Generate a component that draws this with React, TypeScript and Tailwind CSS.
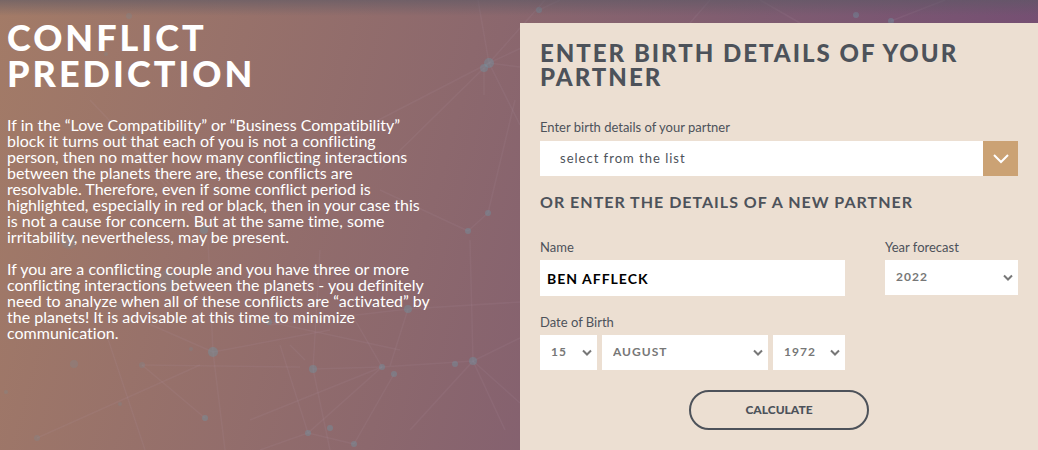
import { useId, useState } from 'react'
import clsx from 'clsx'

const MONTHS = ['January', 'February', 'March', 'April', 'May', 'June', 'July', 'August', 'September', 'October', 'November', 'December']
const DAYS = Array.from({ length: 31 }, (_, i) => String(i + 1))
const YEARS = Array.from({ length: 100 }, (_, i) => String(1925 + i))
const FORECAST_YEARS = ['2021', '2022', '2023', '2024', '2025']

// x, y, radius
const STARS = [
  [129, 16, 3], [106, 54, 2], [489, 63, 5], [484, 68, 4], [539, 10, 3], [856, 15, 3], [891, 21, 3],
  [488, 213, 3], [468, 231, 3], [124, 137, 3], [204, 230, 4], [69, 241, 8], [310, 162, 3],
  [168, 281, 11], [118, 306, 4], [408, 309, 4], [269, 322, 3], [213, 352, 5], [191, 349, 2],
  [142, 365, 3], [74, 364, 4], [313, 369, 4], [382, 367, 3], [394, 374, 3], [455, 364, 3],
  [473, 361, 4], [120, 404, 2], [205, 418, 3], [6, 392, 2], [37, 438, 3], [308, 433, 3],
  [330, 428, 3], [354, 444, 3],
]

// x1, y1, x2, y2
const LINES = [
  [489, 63, 478, 0], [489, 63, 545, 0], [489, 63, 330, 145], [489, 63, 380, 170], [489, 63, 520, 125],
  [489, 63, 560, 30], [489, 63, 560, 72], [484, 68, 484, 95], [124, 137, 204, 230], [90, 100, 175, 190],
  [213, 352, 140, 320], [213, 352, 208, 240], [213, 352, 330, 330], [213, 352, 225, 450],
  [142, 365, 205, 418], [142, 365, 300, 367], [105, 330, 145, 450], [37, 438, 200, 365],
  [313, 369, 382, 367], [382, 367, 473, 361], [313, 369, 330, 450], [313, 369, 320, 250], [382, 367, 355, 320],
  [382, 367, 308, 433], [382, 367, 250, 420], [394, 374, 354, 444], [408, 309, 390, 366],
  [408, 309, 270, 325], [408, 309, 520, 302], [473, 361, 520, 338], [473, 361, 520, 403],
  [473, 361, 505, 430], [473, 361, 410, 430], [473, 361, 470, 240], [488, 213, 468, 231],
  [488, 213, 515, 100], [468, 231, 380, 190], [270, 322, 400, 350], [280, 345, 308, 433],
  [308, 433, 354, 444], [308, 433, 260, 450], [290, 345, 305, 360],
  [539, 10, 560, 0], [760, 0, 800, 23], [891, 21, 945, 0], [690, 23, 710, 0],
]

function Constellation() {
  return (
    <svg className="pointer-events-none absolute top-0 left-0 h-[450px] w-[1038px]" viewBox="0 0 1038 450" aria-hidden="true">
      <g stroke="#b9a0b4" strokeOpacity="0.1" strokeWidth="1.5">
        {LINES.map(([x1, y1, x2, y2], i) => <line key={i} x1={x1} y1={y1} x2={x2} y2={y2} />)}
      </g>
      <g fill="#6f96a5" fillOpacity="0.4">
        {STARS.map(([cx, cy, r], i) => (
          <circle key={i} cx={cx} cy={cy} r={r} fillOpacity={cx < 200 ? 0.2 : undefined} />
        ))}
      </g>
    </svg>
  )
}

type SelectProps = {
  label: string
  id?: string
  options: string[]
  value: string
  onChange: (value: string) => void
  className?: string
}

function SmallSelect({ label, id, options, value, onChange, className }: SelectProps) {
  return (
    <div className={clsx('relative', className)}>
      <select id={id} aria-label={id ? undefined : label} value={value} onChange={(e) => onChange(e.target.value)}
        className="block h-[35px] w-full appearance-none bg-white pr-6 pb-[2px] pl-[11px] text-xs font-bold tracking-[1px] text-[#777777] uppercase">
        {options.map((o) => <option key={o}>{o}</option>)}
      </select>
      <svg className="pointer-events-none absolute top-[14px] right-[5px]" width="10" height="8" viewBox="0 0 10 8" fill="none" aria-hidden="true">
        <path d="M1 1.5 L5 5.5 L9 1.5" stroke="#777777" strokeWidth="2" />
      </svg>
    </div>
  )
}

export default function App() {
  const id = useId()
  const [partner, setPartner] = useState('')
  const [name, setName] = useState('BEN AFFLECK')
  const [forecast, setForecast] = useState('2022')
  const [day, setDay] = useState('15')
  const [month, setMonth] = useState('August')
  const [year, setYear] = useState('1972')

  return (
    <div className="relative min-h-screen overflow-hidden bg-linear-[105deg,#a37b67_0%,#8c686d_42%,#7e5b71_68%,#714a73_100%] font-['Lato','Open_Sans',sans-serif] [font-variant-ligatures:none]">
      <Constellation />
      <div className="pointer-events-none absolute inset-x-0 top-0 h-4 bg-linear-to-b from-[#5b5864]/60 to-transparent" />

      <main className="relative grid min-h-screen grid-cols-2 gap-x-[2px]">
        <section className="pt-[19px] pl-[7px] text-white">
          <h1 className="text-4xl leading-9 font-black tracking-[3px]">
            CONFLICT<br />PREDICTION
          </h1>
          <div className="mt-[26px] space-y-4 text-base leading-4">
            <p>
              If in the “Love Compatibility” or “Business Compatibility”<br />
              block it turns out that each of you is not a conflicting<br />
              person, then no matter how many conflicting interactions<br />
              between the planets there are, these conflicts are<br />
              resolvable. Therefore, even if some conflict period is<br />
              highlighted, especially in red or black, then in your case this<br />
              is not a cause for concern. But at the same time, some<br />
              irritability, nevertheless, may be present.
            </p>
            <p>
              If you are a conflicting couple and you have three or more<br />
              conflicting interactions between the planets - you definitely<br />
              need to analyze when all of these conflicts are “activated” by<br />
              the planets! It is advisable at this time to minimize<br />
              communication.
            </p>
          </div>
        </section>

        <form onSubmit={(e) => e.preventDefault()} className="mt-[23px] bg-[#ecdfd2] px-5 pt-[18px] pb-5 text-[#4d525a]">
          <h2 className="text-2xl leading-6 font-black tracking-[2px]">ENTER BIRTH DETAILS OF YOUR PARTNER</h2>

          <label htmlFor={`${id}-partner`} className="mt-[30px] block text-[13px] leading-4">Enter birth details of your partner</label>
          <div className="relative mt-[6px]">
            <select id={`${id}-partner`} value={partner} onChange={(e) => setPartner(e.target.value)}
              className="block h-[35px] w-full appearance-none bg-white pr-10 pl-5 text-[13px] tracking-[1px]">
              <option value="">select from the list</option>
            </select>
            <span className="pointer-events-none absolute inset-y-0 right-0 flex w-[35px] items-center justify-center bg-[#cba274]">
              <svg width="16" height="10" viewBox="0 0 16 10" fill="none" aria-hidden="true">
                <path d="M1 1 L8 8 L15 1" stroke="#fff" strokeWidth="2" />
              </svg>
            </span>
          </div>

          <h3 className="mt-[18px] text-base leading-4 font-bold tracking-[1px]">OR ENTER THE DETAILS OF A NEW PARTNER</h3>

          <div className="mt-[29px] flex gap-10">
            <div className="flex-1">
              <label htmlFor={`${id}-name`} className="block text-[13px] leading-4">Name</label>
              <input id={`${id}-name`} type="text" value={name} onChange={(e) => setName(e.target.value)}
                className="mt-[5px] block h-9 w-full bg-white px-[7px] text-sm font-bold tracking-[1px] text-black" />
              <fieldset className="mt-[18px]">
                <legend className="text-[13px] leading-4">Date of Birth</legend>
                <div className="mt-[5px] flex gap-[5px]">
                  <SmallSelect label="Day" options={DAYS} value={day} onChange={setDay} className="w-[57px]" />
                  <SmallSelect label="Month" options={MONTHS} value={month} onChange={setMonth} className="flex-1" />
                  <SmallSelect label="Year" options={YEARS} value={year} onChange={setYear} className="w-[72px]" />
                </div>
              </fieldset>
            </div>
            <div className="w-[133px]">
              <label htmlFor={`${id}-forecast`} className="mb-[5px] block text-[13px] leading-4">Year forecast</label>
              <SmallSelect label="Year forecast" id={`${id}-forecast`} options={FORECAST_YEARS} value={forecast} onChange={setForecast} />
            </div>
          </div>

          <button type="submit" className="mx-auto mt-5 block h-10 w-[180px] rounded-full border-2 border-[#4d525a] text-xs font-black">
            CALCULATE
          </button>
        </form>
      </main>
    </div>
  )
}
